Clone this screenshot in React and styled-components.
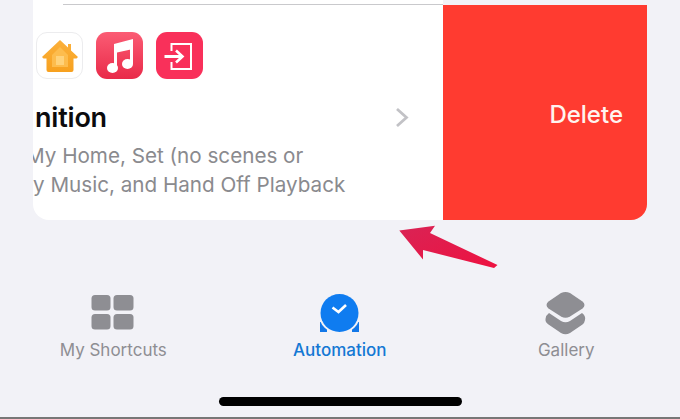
import React from 'react';
import styled, { createGlobalStyle } from 'styled-components';

const GlobalStyle = createGlobalStyle`
  html, body {
    margin: 0;
    padding: 0;
    background: #f2f2f7;
  }
  body {
    font-family: Inter, "Liberation Sans", sans-serif;
    overflow: hidden;
  }
`;

const Screen = styled.div`
  position: relative;
  width: 680px;
  height: 419px;
  display: flex;
  flex-direction: column;
  background: #f2f2f7;
  overflow: hidden;
  border-bottom: 2px solid #777;
  box-sizing: border-box;
`;

const SwipeRow = styled.div`
  display: flex;
  width: 614px;
  height: 220px;
  margin-left: 33px;
`;

const ShortcutCard = styled.div`
  width: 410px;
  padding-top: 4px;
  box-sizing: border-box;
  background: #fff;
  border-bottom-left-radius: 16px;
  overflow: hidden;
`;

const Divider = styled.div`
  height: 1px;
  margin-left: 30px;
  background: #c9c9cc;
`;

const IconRow = styled.div`
  display: flex;
  gap: 13px;
  margin: 27px 0 0 3px;
`;

const AppIcon = styled.div`
  width: 47px;
  height: 47px;
  border-radius: 11px;
  box-sizing: border-box;
  display: flex;
  align-items: center;
  justify-content: center;
  background: ${p => p.$bg};
  border: ${p => (p.$outlined ? '1px solid #ececee' : 'none')};
`;

const TitleRow = styled.div`
  display: flex;
  align-items: center;
  justify-content: space-between;
  height: 32px;
  margin-top: 22px;
  padding: 0 34px 0 2px;
`;

const Title = styled.div`
  font-size: 27px;
  font-weight: 600;
  color: #0b0b0d;
  letter-spacing: -0.2px;
`;

const Details = styled.div`
  margin-top: 8px;
`;

const Detail = styled.div`
  font-size: 20.65px;
  line-height: 29px;
  color: #8a8a8e;
  white-space: nowrap;
  margin-left: ${p => p.$shift}px;
`;

const DeleteAction = styled.div`
  flex: 1;
  margin-top: 5px;
  display: flex;
  align-items: center;
  justify-content: flex-end;
  padding: 3px 24px 0 0;
  background: #ff3b30;
  border-bottom-right-radius: 16px;
  color: #fff3ef;
  font-size: 24px;
  font-weight: 500;
`;

const TabBar = styled.div`
  display: grid;
  grid-template-columns: repeat(3, 226.5px);
  margin-top: 75px;
`;

const Tab = styled.div`
  display: flex;
  flex-direction: column;
  align-items: center;
  color: ${p => (p.$active ? '#1478d4' : '#8e8e93')};
  font-size: 17px;
  line-height: 20px;
  font-weight: ${p => (p.$active ? 500 : 400)};
`;

const TabIcon = styled.svg`
  display: block;
  width: 44px;
  height: 35px;
  margin-bottom: 10px;
  overflow: visible;
`;

const HomeBar = styled.div`
  width: 243px;
  height: 9px;
  margin: 37px 0 0 219px;
  border-radius: 5px;
  background: #000;
`;

const Arrow = styled.svg`
  position: absolute;
  left: 395px;
  top: 222px;
  width: 106px;
  height: 50px;
`;

function HomeGlyph() {
  return (
    <svg width="38" height="36" viewBox="0 0 38 36">
      <defs>
        <linearGradient id="houseFill" x1="0" y1="0" x2="0" y2="1">
          <stop offset="0" stopColor="#fbb03b" />
          <stop offset="1" stopColor="#f7a11f" />
        </linearGradient>
      </defs>
      <path
        d="M19 2 L27 9.5 V6 H30 V12.5 L37 19 L35.5 20.5 H32.5 V32 Q32.5 34 30.5 34 H7.5 Q5.5 34 5.5 32 V20.5 H2.5 L1 19 Z"
        fill="url(#houseFill)"
      />
      <path d="M19 9 L27 17 V29 H11 V17 Z" fill="#fdbc4d" />
      <rect x="15" y="18" width="8" height="9" fill="#ffd27a" />
    </svg>
  );
}

function MusicGlyph() {
  return (
    <svg width="26" height="34" viewBox="0 0 26 34" fill="#fff">
      <path d="M7 5 L26 0 V10 L10 13.5 V29 H7 Z" />
      <rect x="23" y="4" width="3" height="21" />
      <ellipse cx="5.5" cy="29" rx="5.5" ry="5" />
      <ellipse cx="20.5" cy="25" rx="5.5" ry="5" />
    </svg>
  );
}

function ExitGlyph() {
  return (
    <svg width="36" height="36" viewBox="0 0 36 36" fill="none" stroke="#fff" strokeWidth="2">
      <path d="M9.5 13 V6 H29 V31 H9.5 V24" />
      <path d="M2.5 18.5 H20" strokeWidth="3.2" />
      <path d="M14 12.5 L20.5 18.5 L14 24.5" strokeWidth="2.6" />
    </svg>
  );
}

export default function App() {
  return (
    <Screen>
      <GlobalStyle />
      <SwipeRow>
        <ShortcutCard>
          <Divider />
          <IconRow>
            <AppIcon $bg="#fff" $outlined>
              <HomeGlyph />
            </AppIcon>
            <AppIcon $bg="linear-gradient(180deg, #fb5c74, #e92a49)">
              <MusicGlyph />
            </AppIcon>
            <AppIcon $bg="#f9305a">
              <ExitGlyph />
            </AppIcon>
          </IconRow>
          <TitleRow>
            <Title>nition</Title>
            <svg width="14" height="21" viewBox="0 0 14 21" fill="none">
              <path d="M2 2 L11.5 10.5 L2 19" stroke="#c2c2c6" strokeWidth="2.8" />
            </svg>
          </TitleRow>
          <Details>
            <Detail $shift={-7}>My Home, Set (no scenes or</Detail>
            <Detail $shift={0}>y Music, and Hand Off Playback</Detail>
          </Details>
        </ShortcutCard>
        <DeleteAction>Delete</DeleteAction>
      </SwipeRow>
      <TabBar>
        <Tab>
          <TabIcon viewBox="0 0 44 35">
            <rect x="0.5" y="0" width="19" height="15.5" rx="3.5" fill="#8e8e93" />
            <rect x="22.5" y="0" width="20" height="15.5" rx="3.5" fill="#8e8e93" />
            <rect x="0.5" y="19" width="19" height="15.5" rx="3.5" fill="#8e8e93" />
            <rect x="22.5" y="19" width="20" height="15.5" rx="3.5" fill="#8e8e93" />
          </TabIcon>
          My Shortcuts
        </Tab>
        <Tab $active>
          <TabIcon viewBox="0 0 44 35">
            <path d="M2 27 V37 H41 V27 Z" fill="#1277e8" />
            <path d="M9 37 H34 V30 H9 Z" fill="#f2f2f7" />
            <circle cx="21.5" cy="18" r="21" fill="#f2f2f7" />
            <circle cx="21.5" cy="18" r="19" fill="#0f7cf0" />
            <path d="M14.5 12.5 L20.5 17 L28 10" fill="none" stroke="#fff" strokeWidth="2.6" />
          </TabIcon>
          Automation
        </Tab>
        <Tab>
          <TabIcon viewBox="0 0 44 35">
            <path
              d="M5 18 L17 26 Q21.5 28.5 26 26 L38 18 Q42 21 41 25 Q40.5 28 38.5 29.5 L26 38 Q21.5 40.5 17 38 L4.5 29.5 Q1 27 1.5 24 Q2 20 5 18 Z"
              fill="#8e8e93"
            />
            <path
              d="M17 -2 Q21.5 -4 26 -2 L38.5 6.5 Q42.5 10 38.5 13.5 L26 21.5 Q21.5 24 17 21.5 L4.5 13.5 Q0.5 10 4.5 6.5 Z"
              fill="#8e8e93"
            />
          </TabIcon>
          Gallery
        </Tab>
      </TabBar>
      <HomeBar />
      <Arrow viewBox="395 222 106 50">
        <defs>
          <linearGradient id="arrowFill" x1="0" y1="0" x2="1" y2="1">
            <stop offset="0" stopColor="#d92355" />
            <stop offset="1" stopColor="#ee1240" />
          </linearGradient>
        </defs>
        <path
          d="M399.3 230.5 L435 225.7 L430 233 L497.5 265 L494 268 L423 250 L423 259.5 Z"
          fill="url(#arrowFill)"
        />
      </Arrow>
    </Screen>
  );
}
